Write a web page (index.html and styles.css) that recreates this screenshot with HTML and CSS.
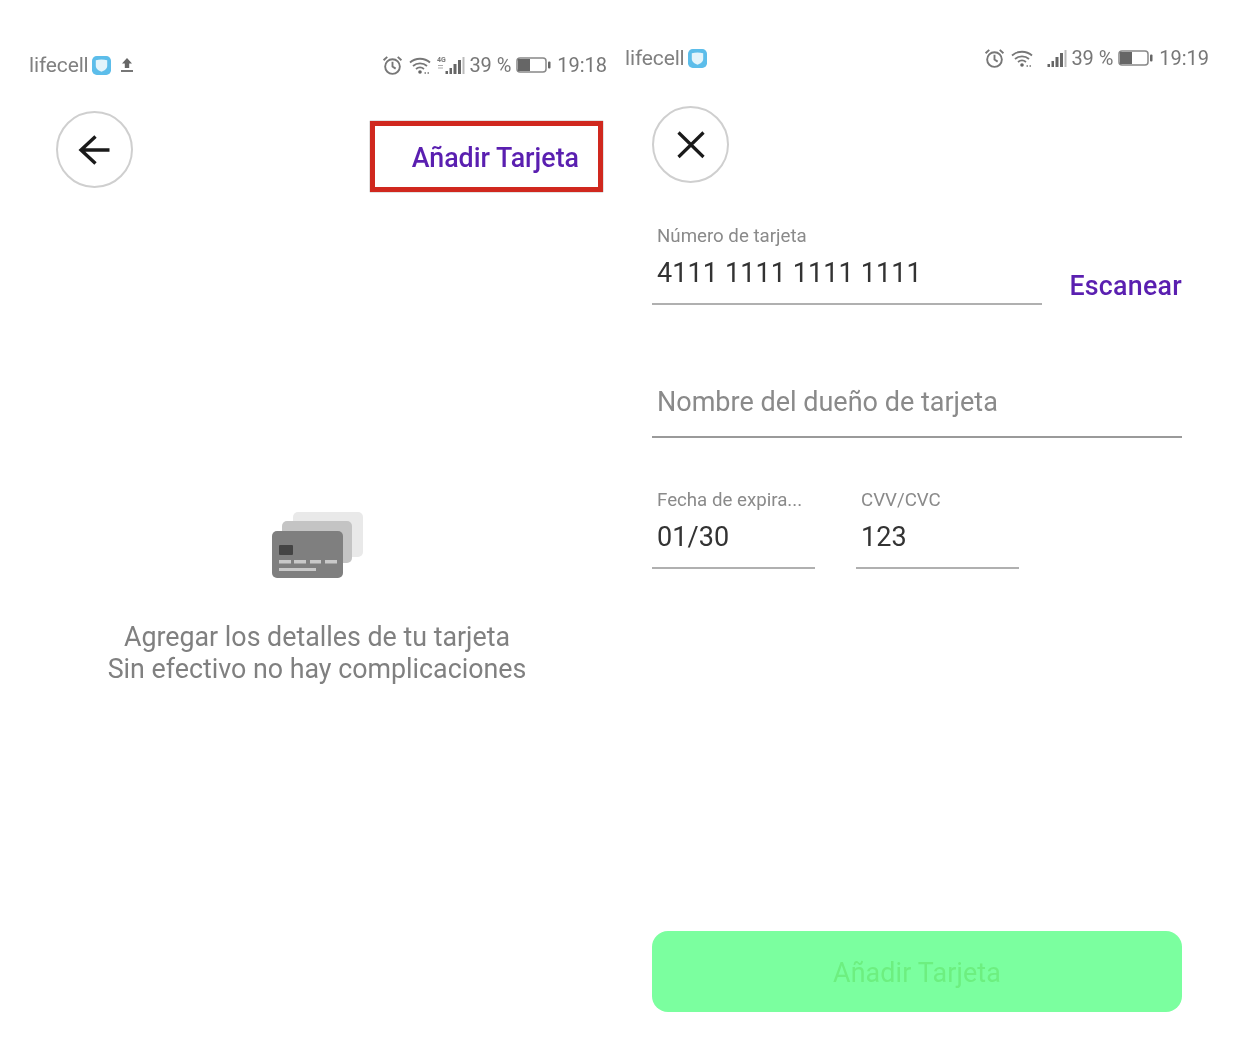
FILE: index.html
```html
<!DOCTYPE html>
<html lang="es">
<head>
<meta charset="utf-8">
<title>Añadir Tarjeta</title>
<link rel="stylesheet" href="styles.css">
</head>
<body>
<main class="screens">
  <section class="phone phone-list">
    <div class="status">
      <div class="status-group">
        <span class="carrier">lifecell</span>
        <svg class="shield" viewBox="0 0 20 20"><rect width="20" height="20" rx="5" fill="#5cbdea"/><path d="M4 4.500c4-1 8-1 12 0v6c0 3-3 4.800-6 6-3-1.200-6-3-6-6z" fill="#e3f4fb"/></svg>
        <svg class="upload" viewBox="0 0 14 16"><path d="M7 1l5 5.500H9.200V11H4.800V6.500H2z" fill="#666"/><rect x="1" y="13" width="12" height="2" fill="#777"/></svg>
      </div>
      <div class="status-group status-right">
        <svg class="alarm" viewBox="0 0 20 20"><circle cx="10" cy="11" r="7" fill="none" stroke="#777" stroke-width="1.800"/><path d="M10 6.500V11l3 2M1.500 5L5 1.800M18.500 5L15 1.800" fill="none" stroke="#777" stroke-width="1.800"/></svg>
        <svg class="wifi" viewBox="0 0 22 18"><path d="M1 6C6.500 1 15.500 1 21 6M4 9.500c4-3.500 10-3.500 14 0M7 12.500c2.500-2 5.500-2 8 0" fill="none" stroke="#777" stroke-width="1.800"/><circle cx="11" cy="15.500" r="1.800" fill="#666"/><path d="M15.500 16.500h1.500M18.500 16.500h1.500" stroke="#777" stroke-width="1.600"/></svg>
        <svg class="signal" viewBox="0 0 28 18"><text x="0" y="6" class="net">4G</text><path d="M1 9.500h5M1 12h5" stroke="#aaa" stroke-width="1"/><path d="M8.500 18v-3h2.500v3zM12.500 18v-6H15v6zM16.500 18V8h3v10zM21 18V4h3v14z" fill="#666"/><path d="M25.500 18V1h2v17z" fill="#bbb"/></svg>
        <span class="percent">39 %</span>
        <svg class="battery" viewBox="0 0 35 16"><rect x="1" y="1" width="29" height="14" rx="3" fill="#fff" stroke="#888" stroke-width="1.500"/><rect x="2" y="2" width="12" height="12" fill="#666"/><rect x="32" y="4.500" width="2.500" height="7" rx="1" fill="#666"/></svg>
        <span class="clock">19:18</span>
      </div>
    </div>

    <header class="list-header">
      <button class="round-btn" aria-label="Volver">
        <svg viewBox="0 0 40 40"><path d="M34.500 20H6M20.500 6.500L6 20l14.500 13.500" fill="none" stroke="#1a1a1a" stroke-width="3.400"/></svg>
      </button>
      <div class="highlight"><a class="link add-link">Añadir Tarjeta</a></div>
    </header>

    <div class="empty">
      <svg class="cards" viewBox="0 0 92 69">
        <rect x="21" y="2" width="70" height="45" rx="5" fill="#e9e9e9"/>
        <rect x="10" y="11" width="70" height="42" rx="5" fill="#c4c4c4"/>
        <rect x="0" y="21" width="71" height="47" rx="5" fill="#7f7f7f"/>
        <rect x="7" y="35" width="14" height="10" rx="1" fill="#444"/>
        <g fill="#c9c9c9">
          <rect x="7" y="50" width="12" height="3.500"/>
          <rect x="22" y="50" width="12" height="3.500"/>
          <rect x="38" y="50" width="11" height="3.500"/>
          <rect x="53" y="50" width="12" height="3.500"/>
          <rect x="7" y="58" width="37" height="3"/>
        </g>
      </svg>
      <p class="empty-text">Agregar los detalles de tu tarjeta<br>Sin efectivo no hay complicaciones</p>
    </div>
  </section>

  <section class="phone phone-form">
    <div class="status status-form">
      <div class="status-group">
        <span class="carrier">lifecell</span>
        <svg class="shield" viewBox="0 0 20 20"><rect width="20" height="20" rx="5" fill="#5cbdea"/><path d="M4 4.500c4-1 8-1 12 0v6c0 3-3 4.800-6 6-3-1.200-6-3-6-6z" fill="#e3f4fb"/></svg>
      </div>
      <div class="status-group status-right">
        <svg class="alarm" viewBox="0 0 20 20"><circle cx="10" cy="11" r="7" fill="none" stroke="#777" stroke-width="1.800"/><path d="M10 6.500V11l3 2M1.500 5L5 1.800M18.500 5L15 1.800" fill="none" stroke="#777" stroke-width="1.800"/></svg>
        <svg class="wifi" viewBox="0 0 22 18"><path d="M1 6C6.500 1 15.500 1 21 6M4 9.500c4-3.500 10-3.500 14 0M7 12.500c2.500-2 5.500-2 8 0" fill="none" stroke="#777" stroke-width="1.800"/><circle cx="11" cy="15.500" r="1.800" fill="#666"/><path d="M15.500 16.500h1.500M18.500 16.500h1.500" stroke="#777" stroke-width="1.600"/></svg>
        <svg class="signal" viewBox="0 0 28 18"><path d="M8.500 18v-3h2.500v3zM12.500 18v-6H15v6zM16.500 18V8h3v10zM21 18V4h3v14z" fill="#666"/><path d="M25.500 18V1h2v17z" fill="#bbb"/></svg>
        <span class="percent">39 %</span>
        <svg class="battery" viewBox="0 0 35 16"><rect x="1" y="1" width="29" height="14" rx="3" fill="#fff" stroke="#888" stroke-width="1.500"/><rect x="2" y="2" width="12" height="12" fill="#666"/><rect x="32" y="4.500" width="2.500" height="7" rx="1" fill="#666"/></svg>
        <span class="clock">19:19</span>
      </div>
    </div>

    <button class="round-btn" aria-label="Cerrar">
      <svg viewBox="0 0 40 40"><path d="M7.500 7.500l25 24.500M32.500 7.500l-25 24.500" fill="none" stroke="#1a1a1a" stroke-width="3.200"/></svg>
    </button>

    <form class="card-form">
      <div class="number-row">
        <div class="field field-number">
          <span class="label">Número de tarjeta</span>
          <span class="value">4111 1111 1111 1111</span>
        </div>
        <a class="link scan-link">Escanear</a>
      </div>

      <div class="field field-name">
        <span class="placeholder">Nombre del dueño de tarjeta</span>
      </div>

      <div class="short-row">
        <div class="field field-short">
          <span class="label">Fecha de expira...</span>
          <span class="value">01/30</span>
        </div>
        <div class="field field-short">
          <span class="label">CVV/CVC</span>
          <span class="value">123</span>
        </div>
      </div>
    </form>

    <button class="submit" disabled>Añadir Tarjeta</button>
  </section>
</main>
</body>
</html>
```

FILE: styles.css
```css
* {
  box-sizing: border-box;
}

html,
body {
  margin: 0;
  background: #fff;
}

body {
  font-family: Roboto, "Liberation Sans", sans-serif;
  overflow: hidden;
}

.screens {
  display: flex;
  width: 1260px;
  height: 1050px;
  filter: blur(0.5px);
}

.phone {
  display: flex;
  flex-direction: column;
  height: 1050px;
}

.phone-list {
  width: 624px;
  padding: 53px 17px 0 0;
}

.phone-form {
  width: 636px;
  padding: 46px 78px 38px 28px;
}

/* Status bar */
.status {
  display: flex;
  justify-content: space-between;
  align-items: center;
  height: 24px;
  padding-left: 29px;
  color: #777;
  font-size: 20px;
}

.status-form {
  margin: 0 -27px;
  padding-left: 0;
}

.status-group {
  display: flex;
  align-items: center;
}

.carrier {
  width: 60px;
  font-size: 21px;
  letter-spacing: -0.15px;
  color: #808080;
}

.shield {
  width: 19px;
  height: 19px;
  margin-left: 3px;
}

.upload {
  width: 14px;
  height: 16px;
  margin-left: 9px;
}

.alarm {
  width: 21px;
  height: 21px;
}

.wifi {
  width: 22px;
  height: 19px;
  margin-left: 6px;
}

.signal {
  width: 28px;
  height: 18px;
  margin-left: 6px;
}

.net {
  font-size: 7px;
  font-weight: 700;
  fill: #777;
}

.percent {
  margin-left: 4px;
  letter-spacing: -0.1px;
}

.battery {
  width: 35px;
  height: 16px;
  margin-left: 5px;
}

.clock {
  margin-left: 6px;
}

/* Round buttons */
.round-btn {
  display: flex;
  align-items: center;
  justify-content: center;
  flex: none;
  width: 77px;
  height: 77px;
  padding: 0;
  border: 2px solid #cfcfcf;
  border-radius: 50%;
  background: #fff;
}

.round-btn svg {
  width: 40px;
  height: 40px;
}

.phone-form .round-btn {
  margin-top: 36px;
}

/* Left screen */
.list-header {
  display: flex;
  justify-content: space-between;
  align-items: flex-start;
  height: 81px;
  margin-top: 34px;
  padding: 0 4px 0 56px;
}

.highlight {
  display: flex;
  justify-content: flex-end;
  align-items: center;
  width: 233px;
  height: 71px;
  margin-top: 10px;
  padding: 2px 19px 0 0;
  border: 5px solid #d0281e;
  box-shadow: 0 0 1px #555;
}

.link {
  color: #5a1fb0;
  font-weight: 500;
  font-size: 26.800px;
  white-space: nowrap;
}

.empty {
  display: flex;
  flex-direction: column;
  align-items: center;
  width: 624px;
  margin-top: 318px;
  padding-left: 10px;
}

.cards {
  width: 92px;
  height: 69px;
  margin-left: 2px;
}

.empty-text {
  margin: 42px 0 0;
  color: #808080;
  font-size: 26.800px;
  line-height: 32px;
  text-align: center;
}

/* Form */
.card-form {
  display: flex;
  flex-direction: column;
  margin-top: 43px;
}

.number-row {
  display: flex;
  justify-content: space-between;
  align-items: flex-end;
}

.field {
  display: flex;
  flex-direction: column;
  padding: 0 0 14px 5px;
  border-bottom: 2px solid #b0b0b0;
}

.field-number {
  width: 390px;
}

.label {
  color: #8a8a8a;
  font-size: 18.700px;
  line-height: 20px;
  white-space: nowrap;
}

.value {
  margin-top: 11px;
  color: #333;
  font-size: 27px;
  line-height: 32px;
  letter-spacing: 0.1px;
}

.scan-link {
  margin-bottom: 3px;
  line-height: 32px;
  letter-spacing: 0.25px;
}

.field-name {
  margin-top: 79px;
  padding: 1px 0 17px 5px;
  border-bottom-color: #9a9a9a;
}

.placeholder {
  color: #8a8a8a;
  font-size: 27px;
  line-height: 34px;
}

.short-row {
  display: flex;
  gap: 41px;
  margin-top: 52px;
}

.field-short {
  width: 163px;
}

.submit {
  width: 530px;
  height: 81px;
  margin-top: auto;
  padding: 2px 0 0;
  border: 0;
  border-radius: 16px;
  background: #7bff9f;
  color: #6def80;
  font-family: inherit;
  font-size: 26.800px;
  letter-spacing: 0.15px;
}
```
